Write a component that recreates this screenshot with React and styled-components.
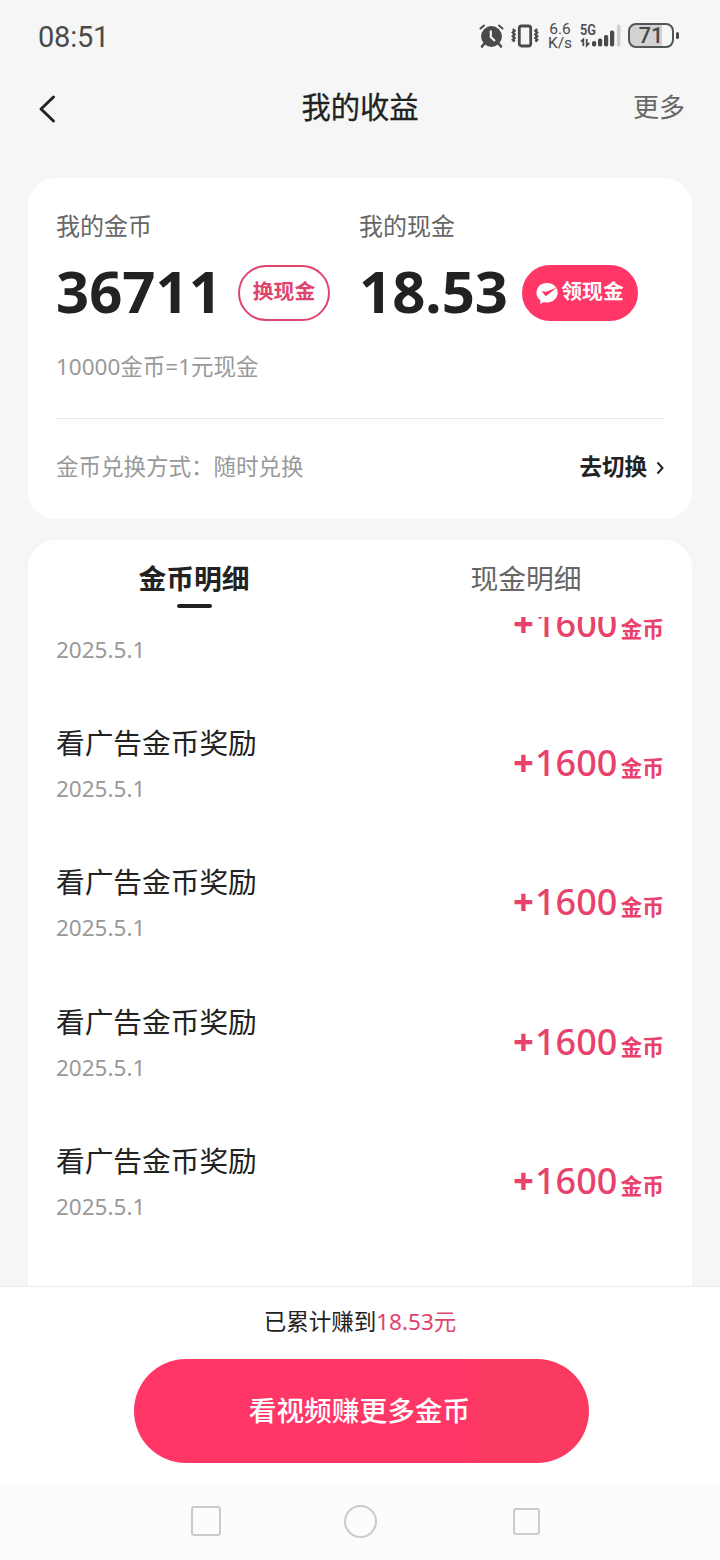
import styled, { createGlobalStyle } from "styled-components";

const GlobalStyle = createGlobalStyle`
  * {
    box-sizing: border-box;
  }

  body {
    margin: 0;
    background: #f6f6f6;
    color: #222;
    font-family: "Noto Sans", "Noto Sans CJK SC", sans-serif;
  }
`;

const Page = styled.div`
  width: 720px;
  height: 1560px;
  display: flex;
  flex-direction: column;
  overflow: hidden;
  background: #f6f6f6;
`;

const StatusBar = styled.div`
  height: 72px;
  flex: none;
  padding: 0 41px 0 38px;
  display: flex;
  align-items: center;
  justify-content: space-between;
  color: #4a4a4a;
`;

const Clock = styled.span`
  font-family: Roboto, sans-serif;
  font-size: 29px;
  line-height: 34px;
  padding-top: 2px;
  letter-spacing: -0.2px;
`;

const StatusIcons = styled.div`
  display: flex;
  align-items: center;

  svg {
    overflow: visible;
  }
`;

const NetSpeed = styled.div`
  width: 26px;
  margin: 0 7px 0 8px;
  font-family: Roboto, sans-serif;
  font-size: 15.5px;
  line-height: 14px;
  text-align: center;
  white-space: nowrap;
`;

const Signal = styled.div`
  width: 42px;
  height: 26px;
  margin-right: 6px;
`;

const Battery = styled.div`
  width: 46px;
  height: 25px;
  margin-top: -1px;
  border: 2px solid #555;
  border-radius: 8px;
  background: linear-gradient(90deg, #d2d2d2 76%, #f6f6f6 76%);
  font-family: Roboto, sans-serif;
  font-size: 21.5px;
  font-weight: 500;
  line-height: 22px;
  text-align: center;
`;

const BatteryCap = styled.span`
  width: 3px;
  height: 7px;
  margin: -2px 0 0 2px;
  border-radius: 2px;
  background: #4a4a4a;
`;

const TitleBar = styled.header`
  height: 70px;
  flex: none;
  padding: 0 35px 0 38px;
  display: grid;
  grid-template-columns: 97px 1fr 100px;
  align-items: center;
`;

const BackButton = styled.button`
  width: 20px;
  height: 30px;
  padding: 0;
  margin-top: 4px;
  border: 0;
  background: none;
  display: flex;
`;

const Title = styled.h1`
  margin: 0;
  font-size: 29.3px;
  font-weight: 400;
  line-height: 40px;
  text-align: center;
  -webkit-text-stroke: 0.3px currentColor;
`;

const More = styled.span`
  font-size: 26px;
  line-height: 40px;
  text-align: right;
  color: #666;
`;

const BalanceCard = styled.section`
  height: 341px;
  flex: none;
  margin: 36px 28px 0;
  padding: 30px 27px 0 28px;
  border-radius: 28px;
  background: #fff;
`;

const Balances = styled.div`
  display: grid;
  grid-template-columns: 303px 1fr;
`;

const Label = styled.div`
  font-size: 24px;
  line-height: 36px;
  color: #666;
`;

const AmountRow = styled.div`
  height: 56px;
  margin-top: 21px;
  display: flex;
  align-items: center;
`;

const Amount = styled.span`
  width: ${(p) => p.$width}px;
  padding-bottom: 4px;
  font-size: 58px;
  font-weight: 700;
  line-height: 56px;
  white-space: nowrap;
`;

const PillButton = styled.button`
  width: ${(p) => (p.$filled ? 116 : 92)}px;
  height: 56px;
  padding: 0 0 6px;
  display: flex;
  align-items: center;
  justify-content: center;
  gap: 3px;
  border: 2px solid ${(p) => (p.$filled ? "#ff3666" : "#e0446d")};
  border-radius: 28px;
  background: ${(p) => (p.$filled ? "#ff3666" : "#fff")};
  color: ${(p) => (p.$filled ? "#fff" : "#e0446d")};
  font-family: inherit;
  font-size: 20.8px;
  font-weight: 700;
  white-space: nowrap;

  svg {
    margin-top: 6px;
  }
`;

const Rate = styled.div`
  margin-top: 28px;
  font-size: 22.5px;
  line-height: 36px;
  color: #999;
`;

const ExchangeRow = styled.div`
  height: 98px;
  margin-top: 33px;
  padding-bottom: 4px;
  border-top: 1px solid #e8e8e8;
  display: flex;
  align-items: center;
  justify-content: space-between;
  font-size: 22.5px;
  color: #999;
`;

const SwitchLink = styled.span`
  display: flex;
  align-items: center;
  gap: 8px;
  color: #222;
  font-weight: 700;

  svg {
    margin-top: 5px;
  }
`;

const DetailCard = styled.section`
  flex: 1;
  min-height: 0;
  margin: 21px 28px 0;
  border-radius: 28px 28px 0 0;
  background: #fff;
  display: flex;
  flex-direction: column;
`;

const Tabs = styled.div`
  height: 77px;
  flex: none;
  display: grid;
  grid-template-columns: 1fr 1fr;
`;

const Tab = styled.div`
  padding-top: 18px;
  display: flex;
  flex-direction: column;
  align-items: center;
  font-size: 27.8px;
  line-height: 40px;
  font-weight: ${(p) => (p.$active ? 700 : 400)};
  color: ${(p) => (p.$active ? "#222" : "#666")};

  &::after {
    content: "";
    width: 35px;
    height: 4px;
    margin-top: 6px;
    border-radius: 2px;
    background: ${(p) => (p.$active ? "#222" : "transparent")};
  }
`;

const ListView = styled.div`
  flex: 1;
  min-height: 0;
  padding: 0 28px;
  overflow: hidden;
`;

const List = styled.ul`
  margin: -60px 0 0;
  padding: 0;
  list-style: none;
`;

const Item = styled.li`
  height: 139.3px;
  display: flex;
  align-items: center;
  justify-content: space-between;
`;

const ItemTitle = styled.div`
  height: 46px;
  font-size: 28.7px;
  line-height: 46px;
  color: #222;
`;

const ItemDate = styled.div`
  font-size: 22.5px;
  line-height: 46px;
  color: #999;
`;

const Reward = styled.div`
  padding-bottom: 6px;
  display: flex;
  align-items: baseline;
  color: #e8416c;
  font-size: 36px;
  font-weight: 500;
  line-height: 46px;

  b {
    width: 23px;
    font-weight: 800;
    text-align: center;
  }

  small {
    margin-left: 3px;
    font-size: 21.8px;
    font-weight: 700;
    line-height: 30px;
  }
`;

const Footer = styled.footer`
  height: 196px;
  flex: none;
  padding-top: 17px;
  border-top: 1px solid #ececec;
  background: #fff;
  display: flex;
  flex-direction: column;
  align-items: center;
`;

const Total = styled.div`
  font-size: 22.5px;
  line-height: 36px;

  em {
    font-style: normal;
    color: #e0446d;
  }
`;

const WatchButton = styled.button`
  width: 455px;
  height: 104px;
  margin: 19px 0 0 3px;
  padding: 0 4px 5px 0;
  border: 0;
  border-radius: 52px;
  background: linear-gradient(90deg, #ff3666 74%, #fb3a62 76%);
  color: #fff;
  font-family: inherit;
  font-size: 27.7px;
  font-weight: 500;
`;

const NavBar = styled.nav`
  height: 78px;
  flex: none;
  padding: 0 111px 0 123px;
  background: #fcfcfc;
  display: grid;
  grid-template-columns: 166px 142px 1fr;
  align-items: center;
  justify-items: center;

  span:last-child {
    margin-left: 12px;
  }
`;

const NavKey = styled.span`
  width: ${(p) => p.$size}px;
  height: ${(p) => p.$size}px;
  border: 2px solid #cbcbcb;
  border-radius: ${(p) => (p.$round ? "50%" : "3px")};
`;

const AlarmIcon = () => (
  <svg width="25" height="24" viewBox="0 0 25 24" fill="none" stroke="#4a4a4a">
    <circle cx="12.5" cy="12.5" r="10.4" fill="#4a4a4a" stroke="none" />
    <path d="M1.500 4.500 5 1.500M23.500 4.500 20 1.500" strokeWidth="2" strokeLinecap="round" />
    <path d="m5 20-2 2.500M20 20l2 2.500" strokeWidth="2.600" strokeLinecap="round" />
    <path d="M11.800 6.500v6.500l4.200 4" stroke="#f6f6f6" strokeWidth="2.200" />
  </svg>
);

const VibrateIcon = () => (
  <svg width="28" height="24" viewBox="0 0 28 24" fill="none" stroke="#4a4a4a">
    <rect x="8.3" y="2" width="11.4" height="20" rx="2.2" strokeWidth="2.8" />
    <path
      d="m1.800 5 1.800 1.800-1.800 1.800 1.800 1.800-1.800 1.800 1.800 1.800-1.800 1.800 1.800 1.800M26.200 5l-1.800 1.800 1.800 1.800-1.800 1.800 1.800 1.800-1.800 1.800 1.800 1.800-1.800 1.800"
      strokeWidth="2.4"
    />
  </svg>
);

const SignalIcon = () => (
  <svg width="42" height="26" viewBox="0 0 42 26" fill="#4a4a4a">
    <text x="0" y="12" fontFamily="Roboto, sans-serif" fontSize="15.5" fontWeight="600" textLength="16" lengthAdjust="spacingAndGlyphs">
      5G
    </text>
    <path d="m1 18.500 2.300-2v6.500M6.700 16v6.500l2.500-2.500" fill="none" stroke="#4a4a4a" strokeWidth="1.8" />
    <rect x="12" y="18" width="4.2" height="5.5" rx="1.8" />
    <rect x="18" y="15.5" width="4.2" height="8" rx="1.8" />
    <rect x="24" y="12" width="4.2" height="11.5" rx="1.8" />
    <rect x="30" y="7.5" width="4.2" height="16" rx="1.8" />
    <rect x="37" y="1.5" width="3.5" height="22" rx="1.5" fill="#cfcfcf" />
  </svg>
);

const ChatCheckIcon = () => (
  <svg width="22" height="22" viewBox="0 0 22 22">
    <path d="M11 1a10.400 9.700 0 1 1-3 18.900L4.200 22l.2-3.700A10 9.700 0 0 1 11 1Z" fill="#fff" />
    <path d="m5.500 9 3.600 4.600c.3.4.8.4 1.300.1L21 5.500l-10.800 4.300c-.4.2-.8.1-1.100-.1Z" fill="#ff3666" />
  </svg>
);

const items = [1, 2, 3, 4, 5].map((id) => ({
  id,
  // the first row is scrolled under the tabs, only its lower half shows
  title: id === 1 ? "" : "看广告金币奖励",
  date: "2025.5.1",
  reward: 1600,
}));

const App = () => {
  return (
    <>
      <GlobalStyle />
      <Page>
        <StatusBar>
          <Clock>08:51</Clock>
          <StatusIcons>
            <AlarmIcon />
            <svg width="7" height="1" />
            <VibrateIcon />
            <NetSpeed>
              6.6
              <br />
              K/s
            </NetSpeed>
            <Signal>
              <SignalIcon />
            </Signal>
            <Battery>71</Battery>
            <BatteryCap />
          </StatusIcons>
        </StatusBar>

        <TitleBar>
          <BackButton>
            <svg width="20" height="30" viewBox="0 0 20 30" fill="none">
              <path d="M15.500 3 3 15l12.500 12" stroke="#222" strokeWidth="3" strokeLinecap="round" strokeLinejoin="round" />
            </svg>
          </BackButton>
          <Title>我的收益</Title>
          <More>更多</More>
        </TitleBar>

        <BalanceCard>
          <Balances>
            <div>
              <Label>我的金币</Label>
              <AmountRow>
                <Amount $width={182}>36711</Amount>
                <PillButton>换现金</PillButton>
              </AmountRow>
            </div>
            <div>
              <Label>我的现金</Label>
              <AmountRow>
                <Amount $width={163}>18.53</Amount>
                <PillButton $filled>
                  <ChatCheckIcon />
                  领现金
                </PillButton>
              </AmountRow>
            </div>
          </Balances>
          <Rate>10000金币=1元现金</Rate>
          <ExchangeRow>
            <span>金币兑换方式：随时兑换</span>
            <SwitchLink>
              去切换
              <svg width="10" height="14" viewBox="0 0 10 14" fill="none">
                <path d="m2.500 1.500 5 5.500-5 5.500" stroke="#222" strokeWidth="2" />
              </svg>
            </SwitchLink>
          </ExchangeRow>
        </BalanceCard>

        <DetailCard>
          <Tabs>
            <Tab $active>金币明细</Tab>
            <Tab>现金明细</Tab>
          </Tabs>
          <ListView>
            <List>
              {items.map((item) => (
                <Item key={item.id}>
                  <div>
                    <ItemTitle>{item.title}</ItemTitle>
                    <ItemDate>{item.date}</ItemDate>
                  </div>
                  <Reward>
                    <b>+</b>
                    {item.reward}
                    <small>金币</small>
                  </Reward>
                </Item>
              ))}
            </List>
          </ListView>
        </DetailCard>

        <Footer>
          <Total>
            已累计赚到<em>18.53元</em>
          </Total>
          <WatchButton>看视频赚更多金币</WatchButton>
        </Footer>

        <NavBar>
          <NavKey $size={30} />
          <NavKey $size={33} $round />
          <NavKey $size={27} />
        </NavBar>
      </Page>
    </>
  );
};

export default App;
